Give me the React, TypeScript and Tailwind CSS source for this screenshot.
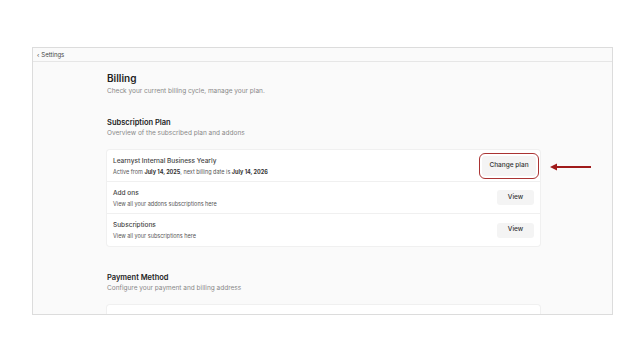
export default function App() {
  return (
    <div className="w-[644px] h-[362px] bg-white" style={{ fontFamily: "Inter, 'Noto Sans', sans-serif" }}>
      <div className="pt-[47px] pl-[32px]">
        <div className="w-[581px] h-[268px] border border-[#dcdcdc] bg-[#fafafa] overflow-hidden flex flex-col">
          <div className="h-[14px] shrink-0 border-b border-[#e6e6e6] flex items-center pl-[4px] text-[6px] text-[#444]">
            <span className="mr-[2px] text-[6px]">‹</span>Settings
          </div>
          <div className="pl-[74px] pr-[71px] pt-[10px]">
            <div className="text-[10px] font-semibold text-[#222] leading-[13px]">Billing</div>
            <div className="text-[6.5px] text-[#888] mt-[2px] leading-[9px]">Check your current billing cycle, manage your plan.</div>

            <div className="mt-[22px] text-[7.5px] font-semibold text-[#222] leading-[10px]">Subscription Plan</div>
            <div className="text-[6.5px] text-[#888] mt-[1px] leading-[9px]">Overview of the subscribed plan and addons</div>

            <div className="mt-[12px] bg-white rounded-[3px] shadow-[0_0_0_1px_#f0f0f0] mr-[1px]">
              <div className="h-[32px] flex items-center justify-between pl-[6px] pr-[4px] border-b border-[#f0f0f0]">
                <div className="pt-[1px]">
                  <div className="text-[6.5px] text-[#444] font-medium leading-[9px]">Learnyst Internal Business Yearly</div>
                  <div className="text-[5.5px] text-[#555] mt-[2px] leading-[8px]">
                    Active from <span className="font-bold text-[#333]">July 14, 2025</span>, next billing date is <span className="font-bold text-[#333]">July 14, 2026</span>
                  </div>
                </div>
                <div className="relative mt-[1px]">
                  <div className="absolute -inset-[3px] border border-[#a33] rounded-[6px]" />
                  <div className="w-[54px] h-[20px] bg-[#f4f4f4] rounded-[3px] flex items-center justify-center text-[6.5px] font-medium text-[#333]">Change plan</div>
                </div>
              </div>
              <div className="h-[32px] flex items-center justify-between pl-[6px] pr-[6px] border-b border-[#f0f0f0]">
                <div className="pt-[1px]">
                  <div className="text-[6.5px] text-[#444] font-medium leading-[9px]">Add ons</div>
                  <div className="text-[5.5px] text-[#555] mt-[2px] leading-[8px]">View all your addons subscriptions here</div>
                </div>
                <div className="w-[37px] h-[15px] bg-[#f4f4f4] rounded-[3px] flex items-center justify-center text-[6.5px] font-medium text-[#333]">View</div>
              </div>
              <div className="h-[32px] flex items-center justify-between pl-[6px] pr-[6px]">
                <div className="pt-[1px]">
                  <div className="text-[6.5px] text-[#444] font-medium leading-[9px]">Subscriptions</div>
                  <div className="text-[5.5px] text-[#555] mt-[2px] leading-[8px]">View all your subscriptions here</div>
                </div>
                <div className="w-[37px] h-[15px] bg-[#f4f4f4] rounded-[3px] flex items-center justify-center text-[6.5px] font-medium text-[#333]">View</div>
              </div>
            </div>

            <div className="mt-[27px] text-[7.5px] font-semibold text-[#222] leading-[10px]">Payment Method</div>
            <div className="text-[6.5px] text-[#888] mt-[1px] leading-[9px]">Configure your payment and billing address</div>
            <div className="mt-[12px] mr-[1px] h-[20px] bg-white rounded-[3px] shadow-[0_0_0_1px_#f0f0f0]" />
          </div>
        </div>
      </div>
      <svg className="absolute left-[549px] top-[162px]" width="43" height="10" viewBox="0 0 43 10">
        <line x1="6" y1="5" x2="42" y2="5" stroke="#a01a1a" strokeWidth="1.8" />
        <path d="M1 5 L8 1.5 L8 8.5 Z" fill="#a01a1a" />
      </svg>
    </div>
  );
}
